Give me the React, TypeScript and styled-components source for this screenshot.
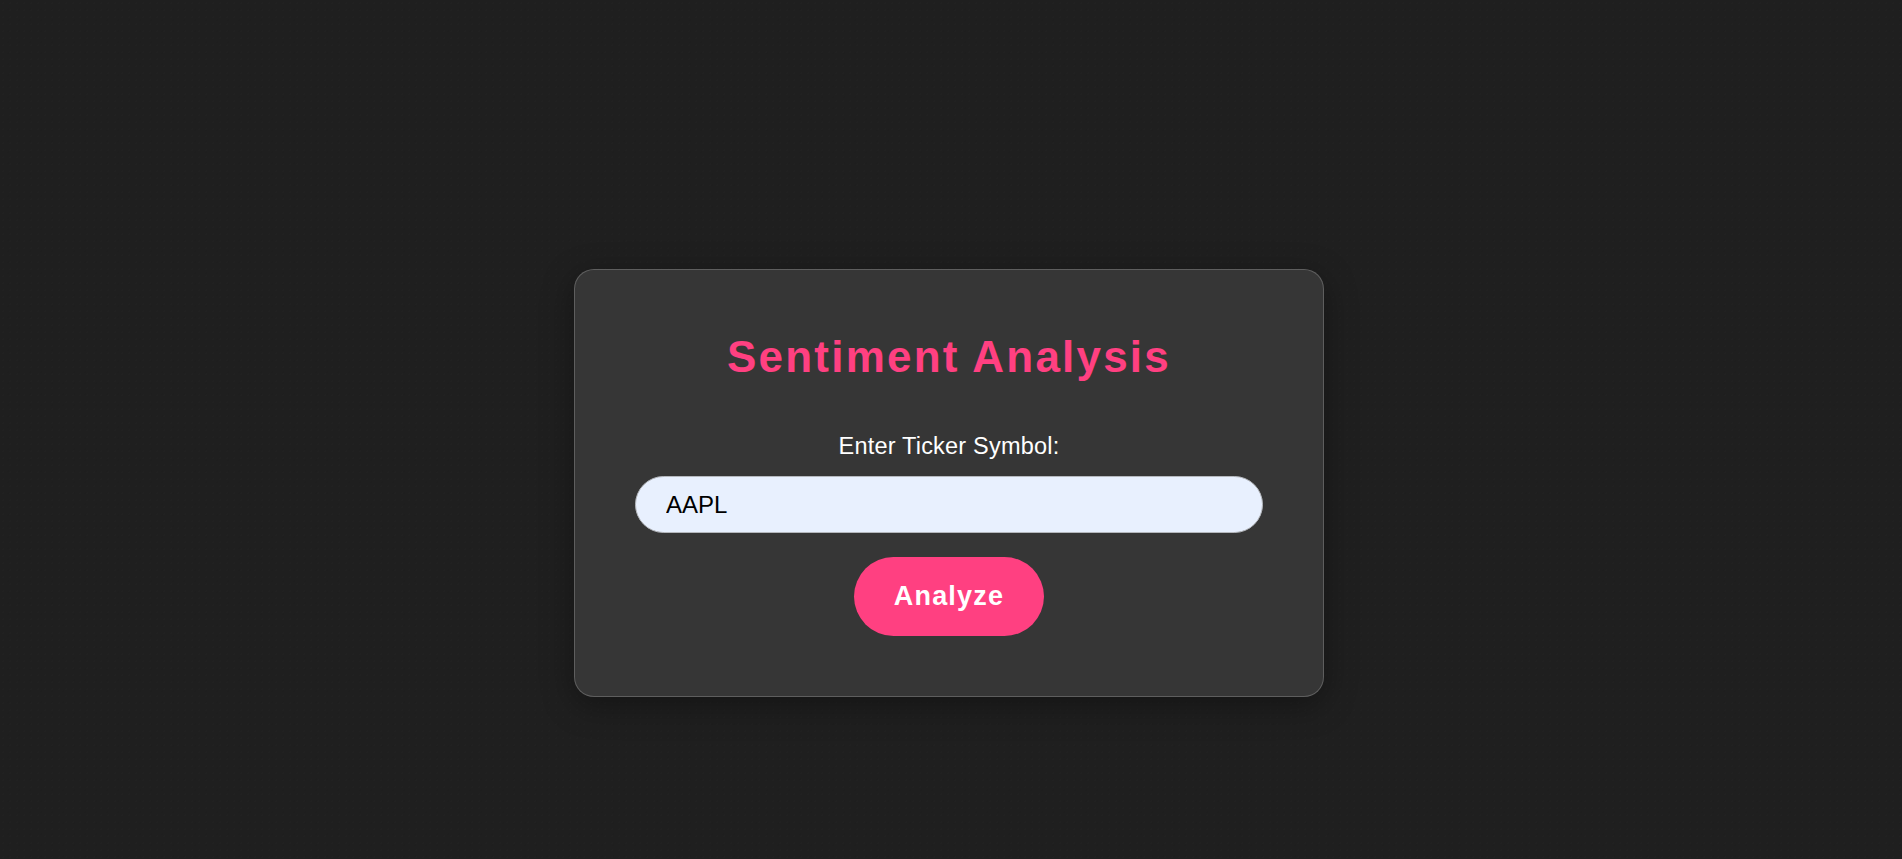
import React, { useState } from "react";
import styled, { createGlobalStyle } from "styled-components";

const GlobalStyle = createGlobalStyle`
  html, body {
    margin: 0;
    padding: 0;
    background: #1f1f1f;
  }
  body {
    font-family: "Liberation Sans", Arial, Helvetica, sans-serif;
  }
  * { box-sizing: border-box; }
`;

const Page = styled.div`
  min-height: 100vh;
  display: flex;
  justify-content: center;
  align-items: flex-start;
  padding: 269px 4px 0 0;
  background-color: #1f1f1f;
  background-image:
    radial-gradient(rgba(255, 255, 255, 0.006) 1px, transparent 1px),
    radial-gradient(rgba(0, 0, 0, 0.03) 1px, transparent 1px);
  background-size: 7px 7px, 11px 11px;
  background-position: 0 0, 3px 4px;
`;

const Card = styled.div`
  width: 750px;
  display: flex;
  flex-direction: column;
  align-items: center;
  padding: 60px;
  background: #363636;
  border: 1px solid rgba(255, 255, 255, 0.2);
  border-radius: 20px;
  box-shadow: 0 8px 32px rgba(0, 0, 0, 0.35);
`;

const Title = styled.h1`
  margin: 2px 0 0;
  font-size: 44px;
  line-height: 50px;
  font-weight: 700;
  letter-spacing: 2.2px;
  color: #ff4081;
  text-align: center;
`;

const Form = styled.form`
  width: 100%;
  display: flex;
  flex-direction: column;
  align-items: center;
  margin-top: 52px;
`;

const Label = styled.label`
  font-size: 23.5px;
  line-height: 24px;
  letter-spacing: 0.2px;
  color: #ffffff;
  margin-bottom: 18px;
`;

const Input = styled.input`
  width: 100%;
  height: 57px;
  padding: 14px 30px;
  font-family: "Liberation Sans", Arial, Helvetica, sans-serif;
  font-size: 24px;
  line-height: 27px;
  color: #000;
  background: #e8f0fe;
  border: 1px solid #b5b8bd;
  border-radius: 30px;
  outline: none;
`;

const Button = styled.button`
  margin-top: 24px;
  width: 190px;
  height: 79px;
  padding: 0;
  font-family: "Liberation Sans", Arial, Helvetica, sans-serif;
  font-size: 27px;
  font-weight: 700;
  letter-spacing: 1.2px;
  color: #fff;
  background: #ff4081;
  border: none;
  border-radius: 40px;
  cursor: pointer;
`;

export default function App() {
  const [ticker, setTicker] = useState("AAPL");
  return (
    <>
      <GlobalStyle />
      <Page>
        <Card>
          <Title>Sentiment Analysis</Title>
          <Form onSubmit={(e) => e.preventDefault()}>
            <Label htmlFor="ticker">Enter Ticker Symbol:</Label>
            <Input
              id="ticker"
              value={ticker}
              onChange={(e) => setTicker(e.target.value)}
            />
            <Button type="submit">Analyze</Button>
          </Form>
        </Card>
      </Page>
    </>
  );
}
